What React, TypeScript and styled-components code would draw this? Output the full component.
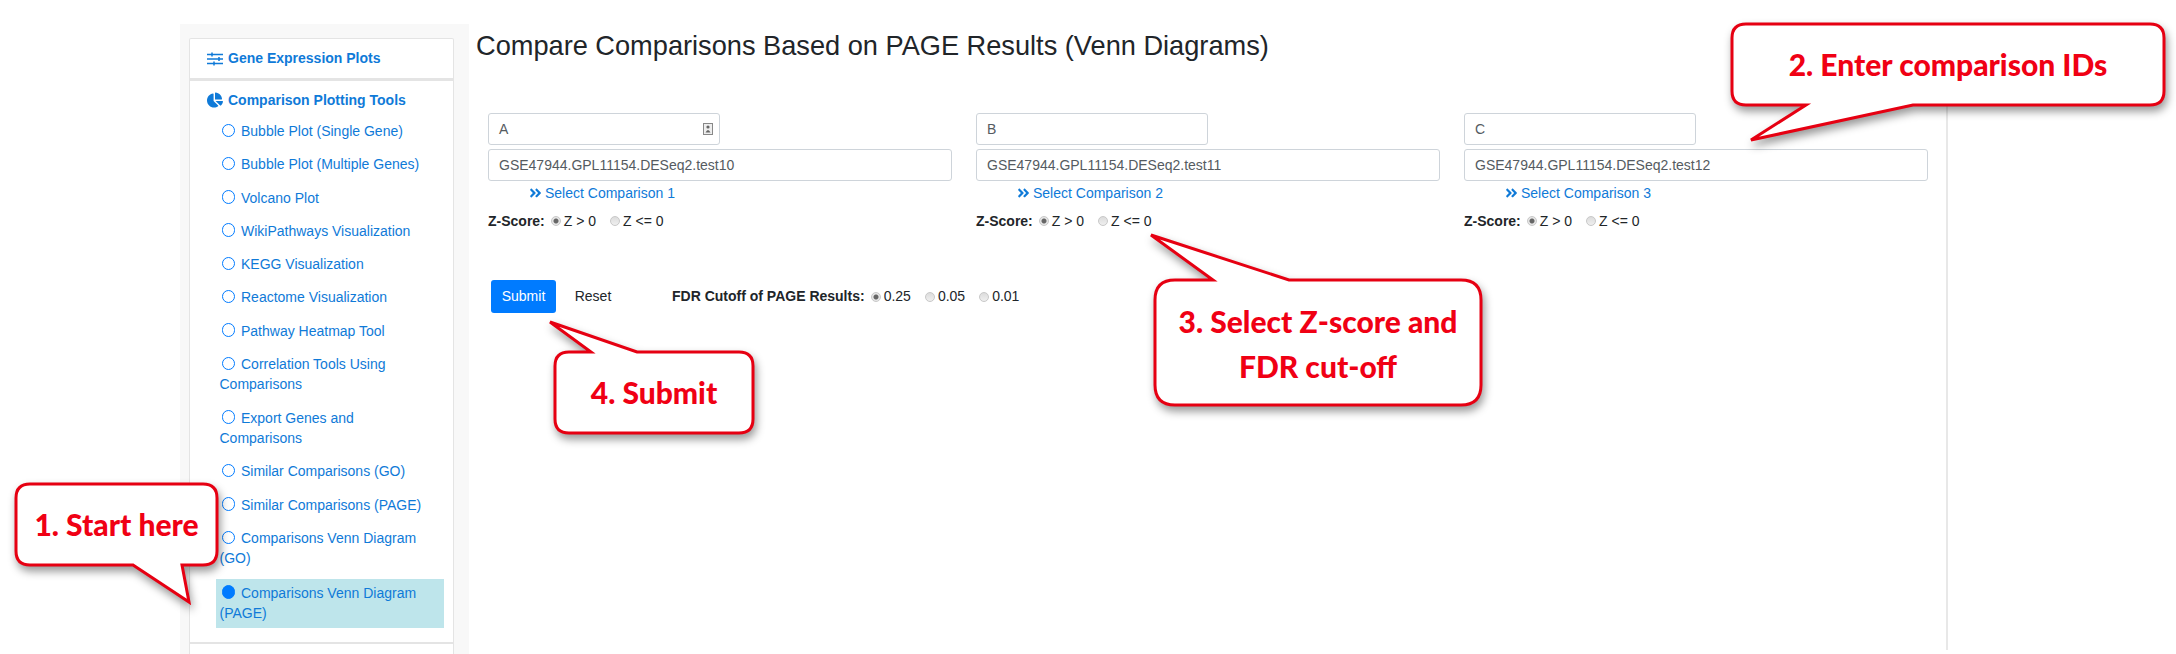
import React from "react";
import styled, { createGlobalStyle } from "styled-components";
import { FaAngleDoubleRight, FaChartPie } from "react-icons/fa";

const GlobalStyle = createGlobalStyle`
  html, body {
    margin: 0;
    padding: 0;
    background: #fff;
    overflow: hidden;
  }
  body {
    font-family: "Liberation Sans", Arial, sans-serif;
    font-size: 14px;
    line-height: 20.4px;
    color: #212529;
  }
`;

const Page = styled.div`
  position: relative;
  display: flex;
  align-items: flex-start;
  width: 2176px;
  height: 654px;
  box-sizing: border-box;
  padding: 24px 0 0 180px;
  overflow: hidden;
`;

const Sidebar = styled.aside`
  flex: none;
  width: 289px;
  height: 630px;
  box-sizing: border-box;
  padding: 14px 15px 0 9px;
  background: #f8f8f8;
`;

const NavCard = styled.div`
  background: #fff;
  border: 1px solid #e4e4e4;
  border-bottom-width: 3px;
  border-radius: 2px 2px 0 0;
`;

const NavHead = styled.div`
  display: flex;
  align-items: center;
  gap: 5px;
  height: 39px;
  padding-left: 17px;
  color: #0f7ad8;
  font-weight: 700;
  svg {
    flex: none;
    width: 16px;
    height: 16px;
  }
`;

const SectionHead = styled(NavHead)`
  height: 20px;
  padding-left: 0;
`;

const NavSection = styled.div`
  height: 563px;
  box-sizing: border-box;
  padding: 9px 9px 0 17px;
  border: 1px solid #e4e4e4;
  border-top: 0;
  border-bottom-width: 2px;
  background: #fff;
`;

const NextCard = styled.div`
  height: 12px;
  background: #fff;
  border: 1px solid #e4e4e4;
  border-width: 0 1px;
`;

const NavList = styled.ul`
  list-style: none;
  margin: 11px 0 0;
  padding: 0 0 0 9px;
`;

const NavItem = styled.li<{ $active?: boolean }>`
  margin: ${(p) => (p.$active ? "-3px 0 0" : "0 0 12.9px")};
  padding: ${(p) => (p.$active ? "4px 16px 4px 3.5px" : "0 16px 0 3.5px")};
  background: ${(p) => (p.$active ? "#bee5eb" : "transparent")};
  color: #0f7ad8;
`;

const Bullet = styled.span<{ $filled?: boolean }>`
  display: inline-block;
  width: 13.5px;
  height: 13.5px;
  box-sizing: border-box;
  margin: 0 6px 0 2px;
  border: 1.5px solid #007bff;
  border-radius: 50%;
  background: ${(p) => (p.$filled ? "#007bff" : "transparent")};
  vertical-align: -1px;
`;

const Main = styled.main`
  flex: none;
  width: 1479px;
  height: 626px;
  box-sizing: border-box;
  padding: 0 0 0 7px;
  border-right: 2px solid #e8e8e8;
`;

const Title = styled.h1`
  margin: 6px 0 0;
  font-size: 27.2px;
  line-height: 32px;
  font-weight: 400;
`;

const Columns = styled.div`
  display: grid;
  grid-template-columns: repeat(3, 464px);
  column-gap: 24px;
  margin: 51px 0 0 12px;
`;

const Column = styled.section`
  display: flex;
  flex-direction: column;
`;

const Field = styled.div<{ $short?: boolean }>`
  position: relative;
  display: flex;
  align-items: center;
  width: ${(p) => (p.$short ? "232px" : "464px")};
  height: 32px;
  box-sizing: border-box;
  margin-bottom: ${(p) => (p.$short ? "4px" : "0")};
  padding: 0 10px;
  background: #fff;
  border: 1px solid #ced4da;
  border-radius: 3px;
  color: #555b61;
`;

const ContactIcon = styled.svg`
  position: absolute;
  right: 6px;
  top: 9px;
  width: 10px;
  height: 12px;
`;

const SelectLink = styled.a`
  display: flex;
  align-items: center;
  gap: 3px;
  height: 24px;
  margin-left: 41px;
  color: #0f7ad8;
  svg {
    width: 13px;
    height: 14px;
  }
`;

const OptionRow = styled.div`
  display: flex;
  align-items: center;
  height: 20px;
  margin-top: 6px;
  color: #212529;
`;

const OptionLabel = styled.strong`
  margin-right: 6px;
`;

const Option = styled.span`
  display: inline-flex;
  align-items: center;
  gap: 3px;
  margin-right: 14px;
`;

const Radio = styled.span<{ $checked?: boolean }>`
  display: inline-block;
  width: 8px;
  height: 8px;
  border: 1px solid #c8c8c8;
  border-radius: 50%;
  background: ${(p) =>
    p.$checked
      ? "radial-gradient(circle, #666 0 2px, #e6e6e6 3px)"
      : "linear-gradient(#dcdcdc, #efefef)"};
`;

const Actions = styled.div`
  display: flex;
  align-items: center;
  margin: 49px 0 0 15px;
`;

const SubmitButton = styled.button`
  width: 65px;
  height: 33px;
  padding: 0;
  background: #007bff;
  border: 0;
  border-radius: 3px;
  color: #fff;
  font: inherit;
`;

const ResetButton = styled.button`
  width: 74px;
  height: 33px;
  padding: 0;
  background: transparent;
  border: 0;
  color: #212529;
  font: inherit;
`;

const CutoffGroup = styled(OptionRow)`
  margin: 0 0 0 42px;
`;

const CalloutBox = styled.div<{
  $left: number;
  $top: number;
  $width: number;
  $height: number;
  $nudge?: number;
}>`
  position: absolute;
  left: ${(p) => p.$left}px;
  top: ${(p) => p.$top}px;
  width: ${(p) => p.$width}px;
  height: ${(p) => p.$height}px;
  box-sizing: border-box;
  padding-top: ${(p) => p.$nudge ?? 0}px;
  display: flex;
  align-items: center;
  justify-content: center;
  text-align: center;
  color: #f00014;
  font-family: Lato, "Open Sans", sans-serif;
  font-size: 30px;
  font-weight: 900;
  line-height: 45px;
  svg {
    position: absolute;
    left: 0;
    top: 0;
    overflow: visible;
    filter: drop-shadow(2px 5px 4px rgba(0, 0, 0, 0.4));
  }
  span {
    position: relative;
  }
`;

type CalloutProps = {
  left: number;
  top: number;
  width: number;
  height: number;
  nudge?: number;
  outline: string;
  children: React.ReactNode;
};

function Callout({ left, top, width, height, nudge, outline, children }: CalloutProps) {
  return (
    <CalloutBox $left={left} $top={top} $width={width} $height={height} $nudge={nudge}>
      <svg width={width} height={height} aria-hidden="true">
        <path d={outline} fill="#fff" stroke="#e60012" strokeWidth="3" strokeLinejoin="miter" />
      </svg>
      <span>{children}</span>
    </CalloutBox>
  );
}

function SlidersIcon() {
  return (
    <svg viewBox="0 0 16 16" aria-hidden="true">
      <g stroke="currentColor" strokeWidth="1.5">
        <path d="M0 3.5H16M0 8H16M0 12.5H16" />
        <path d="M5 1.5V5.5M12 6V10M7 10.5V14.5" />
      </g>
    </svg>
  );
}

const navItems = [
  "Bubble Plot (Single Gene)",
  "Bubble Plot (Multiple Genes)",
  "Volcano Plot",
  "WikiPathways Visualization",
  "KEGG Visualization",
  "Reactome Visualization",
  "Pathway Heatmap Tool",
  "Correlation Tools Using Comparisons",
  "Export Genes and Comparisons",
  "Similar Comparisons (GO)",
  "Similar Comparisons (PAGE)",
  "Comparisons Venn Diagram (GO)",
];

const comparisons = [
  { name: "A", id: "GSE47944.GPL11154.DESeq2.test10", link: "Select Comparison 1" },
  { name: "B", id: "GSE47944.GPL11154.DESeq2.test11", link: "Select Comparison 2" },
  { name: "C", id: "GSE47944.GPL11154.DESeq2.test12", link: "Select Comparison 3" },
];

function App() {
  return (
    <Page>
      <GlobalStyle />
      <Sidebar>
        <NavCard>
          <NavHead>
            <SlidersIcon />
            Gene Expression Plots
          </NavHead>
        </NavCard>
        <NavSection>
          <SectionHead>
            <FaChartPie />
            Comparison Plotting Tools
          </SectionHead>
          <NavList>
            {navItems.map((item) => (
              <NavItem key={item}>
                <Bullet />
                {item}
              </NavItem>
            ))}
            <NavItem $active>
              <Bullet $filled />
              Comparisons Venn Diagram (PAGE)
            </NavItem>
          </NavList>
        </NavSection>
        <NextCard />
      </Sidebar>
      <Main>
        <Title>Compare Comparisons Based on PAGE Results (Venn Diagrams)</Title>
        <Columns>
          {comparisons.map((c) => (
            <Column key={c.name}>
              <Field $short>
                {c.name}
                {c.name === "A" && (
                  <ContactIcon viewBox="0 0 10 12">
                    <rect x="0.5" y="0.5" width="9" height="11" fill="#eee" stroke="#888" />
                    <circle cx="5" cy="4" r="1.6" fill="#666" />
                    <path d="M2.5 9.5 Q5 4.5 7.5 9.5Z" fill="#666" />
                  </ContactIcon>
                )}
              </Field>
              <Field>{c.id}</Field>
              <SelectLink>
                <FaAngleDoubleRight />
                {c.link}
              </SelectLink>
              <OptionRow>
                <OptionLabel>Z-Score:</OptionLabel>
                <Option>
                  <Radio $checked />Z &gt; 0
                </Option>
                <Option>
                  <Radio />Z &lt;= 0
                </Option>
              </OptionRow>
            </Column>
          ))}
        </Columns>
        <Actions>
          <SubmitButton>Submit</SubmitButton>
          <ResetButton>Reset</ResetButton>
          <CutoffGroup>
            <OptionLabel>FDR Cutoff of PAGE Results:</OptionLabel>
            <Option>
              <Radio $checked />0.25
            </Option>
            <Option>
              <Radio />0.05
            </Option>
            <Option>
              <Radio />0.01
            </Option>
          </CutoffGroup>
        </Actions>
      </Main>
      <Callout
        left={16}
        top={484}
        width={201}
        height={81}
        outline="M14 0H187Q201 0 201 14V67Q201 81 187 81H166L173 118L117 81H14Q0 81 0 67V14Q0 0 14 0Z"
      >
        1. Start here
      </Callout>
      <Callout
        left={1732}
        top={24}
        width={432}
        height={81}
        outline="M14 0H418Q432 0 432 14V67Q432 81 418 81H181L19 116L74 81H14Q0 81 0 67V14Q0 0 14 0Z"
      >
        2. Enter comparison IDs
      </Callout>
      <Callout
        left={1155}
        top={280}
        width={326}
        height={125}
        nudge={3}
        outline="M20 0H58L-4 -45L134 0H306Q326 0 326 20V105Q326 125 306 125H20Q0 125 0 105V20Q0 0 20 0Z"
      >
        3. Select Z-score and
        <br />
        FDR cut-off
      </Callout>
      <Callout
        left={555}
        top={352}
        width={198}
        height={81}
        outline="M14 0H36L-5 -30L82 0H184Q198 0 198 14V67Q198 81 184 81H14Q0 81 0 67V14Q0 0 14 0Z"
      >
        4. Submit
      </Callout>
    </Page>
  );
}

export default App;
